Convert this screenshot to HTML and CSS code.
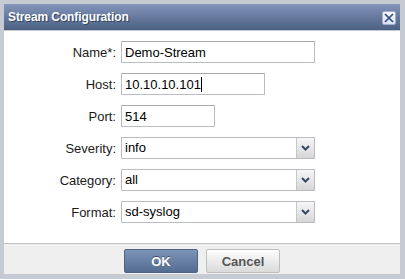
FILE: index.html
```html
<!DOCTYPE html>
<html lang="en">
<head>
    <meta charset="UTF-8">
    <meta name="viewport" content="width=device-width, initial-scale=1.0">
    <title>Stream Configuration</title>
    <link rel="stylesheet" href="styles.css">
</head>
<body>
    <div class="dialog">
        <div class="titlebar">
            <span class="title">Stream Configuration</span>
            <button type="button" class="close" aria-label="Close">
                <svg width="10" height="10" viewBox="0 0 10 10">
                    <path d="M1 1 L9 9 M9 1 L1 9" stroke="#2c4a7c" stroke-width="1.6" fill="none"/>
                </svg>
            </button>
        </div>
        <form class="form" id="streamForm">
            <label for="name">Name*:</label>
            <input type="text" id="name" class="text wide" value="Demo-Stream">

            <label for="host">Host:</label>
            <div class="host-wrap">
                <input type="text" id="host" class="text medium" value="10.10.10.101">
                <span class="caret"></span>
            </div>

            <label for="port">Port:</label>
            <input type="text" id="port" class="text short" value="514">

            <label>Severity:</label>
            <div class="select">
                <span class="value">info</span>
                <span class="arrow"><svg width="9" height="6" viewBox="0 0 9 6"><path d="M1 1 L4.5 4.5 L8 1" stroke="#34496b" stroke-width="2" fill="none"/></svg></span>
            </div>

            <label>Category:</label>
            <div class="select">
                <span class="value">all</span>
                <span class="arrow"><svg width="9" height="6" viewBox="0 0 9 6"><path d="M1 1 L4.5 4.5 L8 1" stroke="#34496b" stroke-width="2" fill="none"/></svg></span>
            </div>

            <label>Format:</label>
            <div class="select">
                <span class="value">sd-syslog</span>
                <span class="arrow"><svg width="9" height="6" viewBox="0 0 9 6"><path d="M1 1 L4.5 4.5 L8 1" stroke="#34496b" stroke-width="2" fill="none"/></svg></span>
            </div>
        </form>
        <div class="footer">
            <button type="button" class="btn ok">OK</button>
            <button type="button" class="btn cancel">Cancel</button>
        </div>
    </div>
</body>
</html>
```
FILE: styles.css
```css
body {
    margin: 0;
    padding: 4px 5px 5px 4px;
    background: #c6cad2;
    font-family: "Liberation Sans", Arial, sans-serif;
    font-size: 13px;
    color: #111;
}
.dialog {
    width: 396px;
    background: #fff;
}
.titlebar {
    height: 26px;
    display: flex;
    align-items: center;
    justify-content: space-between;
    padding: 0 4px 0 4px;
    background: linear-gradient(#8494bb, #4b6082);
    border-bottom: 1px solid #c4c8d0;
}
.title {
    color: #fff;
    font-weight: bold;
    font-size: 12px;
    letter-spacing: -0.1px;
    text-shadow: 1px 1px 0 #33445f;
}
.close {
    width: 14px;
    height: 14px;
    padding: 0;
    margin-top: 1px;
    border: 1px solid #9fb0cc;
    border-radius: 2px;
    background: linear-gradient(#f4f7fc, #d9e3f2);
    display: flex;
    align-items: center;
    justify-content: center;
}
.form {
    display: grid;
    grid-template-columns: 112px auto;
    column-gap: 5px;
    row-gap: 10px;
    justify-items: start;
    align-items: center;
    padding: 10px 0 20px 0;
    border-bottom: 1px solid #c2c2c2;
}
.form label {
    justify-self: end;
    color: #1a1a1a;
}
.text {
    box-sizing: border-box;
    height: 22px;
    margin: 0;
    padding: 0 3px;
    border: 1px solid #b9bcc4;
    border-top-color: #a8abb3;
    font-family: inherit;
    font-size: 13px;
    color: #000;
    background: #fff;
    outline: none;
}
.wide {
    width: 194px;
}
.medium {
    width: 144px;
}
.short {
    width: 94px;
}
.host-wrap {
    position: relative;
}
.caret {
    position: absolute;
    left: 80px;
    top: 4px;
    width: 1px;
    height: 15px;
    background: #000;
}
.select {
    box-sizing: border-box;
    width: 194px;
    height: 22px;
    display: flex;
    border: 1px solid #b9bcc4;
    background: #fff;
}
.select .value {
    flex: 1;
    padding: 0 3px;
    line-height: 20px;
    color: #000;
}
.select .arrow {
    width: 17px;
    display: flex;
    align-items: center;
    justify-content: center;
    border-left: 1px solid #c4c6cc;
    background: linear-gradient(#f6f6f6, #d6d6d6);
}
.footer {
    height: 30px;
    display: flex;
    justify-content: center;
    align-items: flex-start;
    gap: 8px;
    padding-top: 5px;
    box-sizing: border-box;
    background: #efefef;
}
.btn {
    width: 74px;
    height: 24px;
    font-family: inherit;
    font-size: 13px;
    font-weight: bold;
    border-radius: 2px;
    cursor: pointer;
}
.ok {
    color: #fff;
    border: 1px solid #4d6486;
    background: linear-gradient(#7d94b6, #536c90);
    text-shadow: 0 -1px 0 #3d5272;
}
.cancel {
    color: #555;
    border: 1px solid #bdbdbd;
    background: linear-gradient(#fefefe, #dadada);
}
```
